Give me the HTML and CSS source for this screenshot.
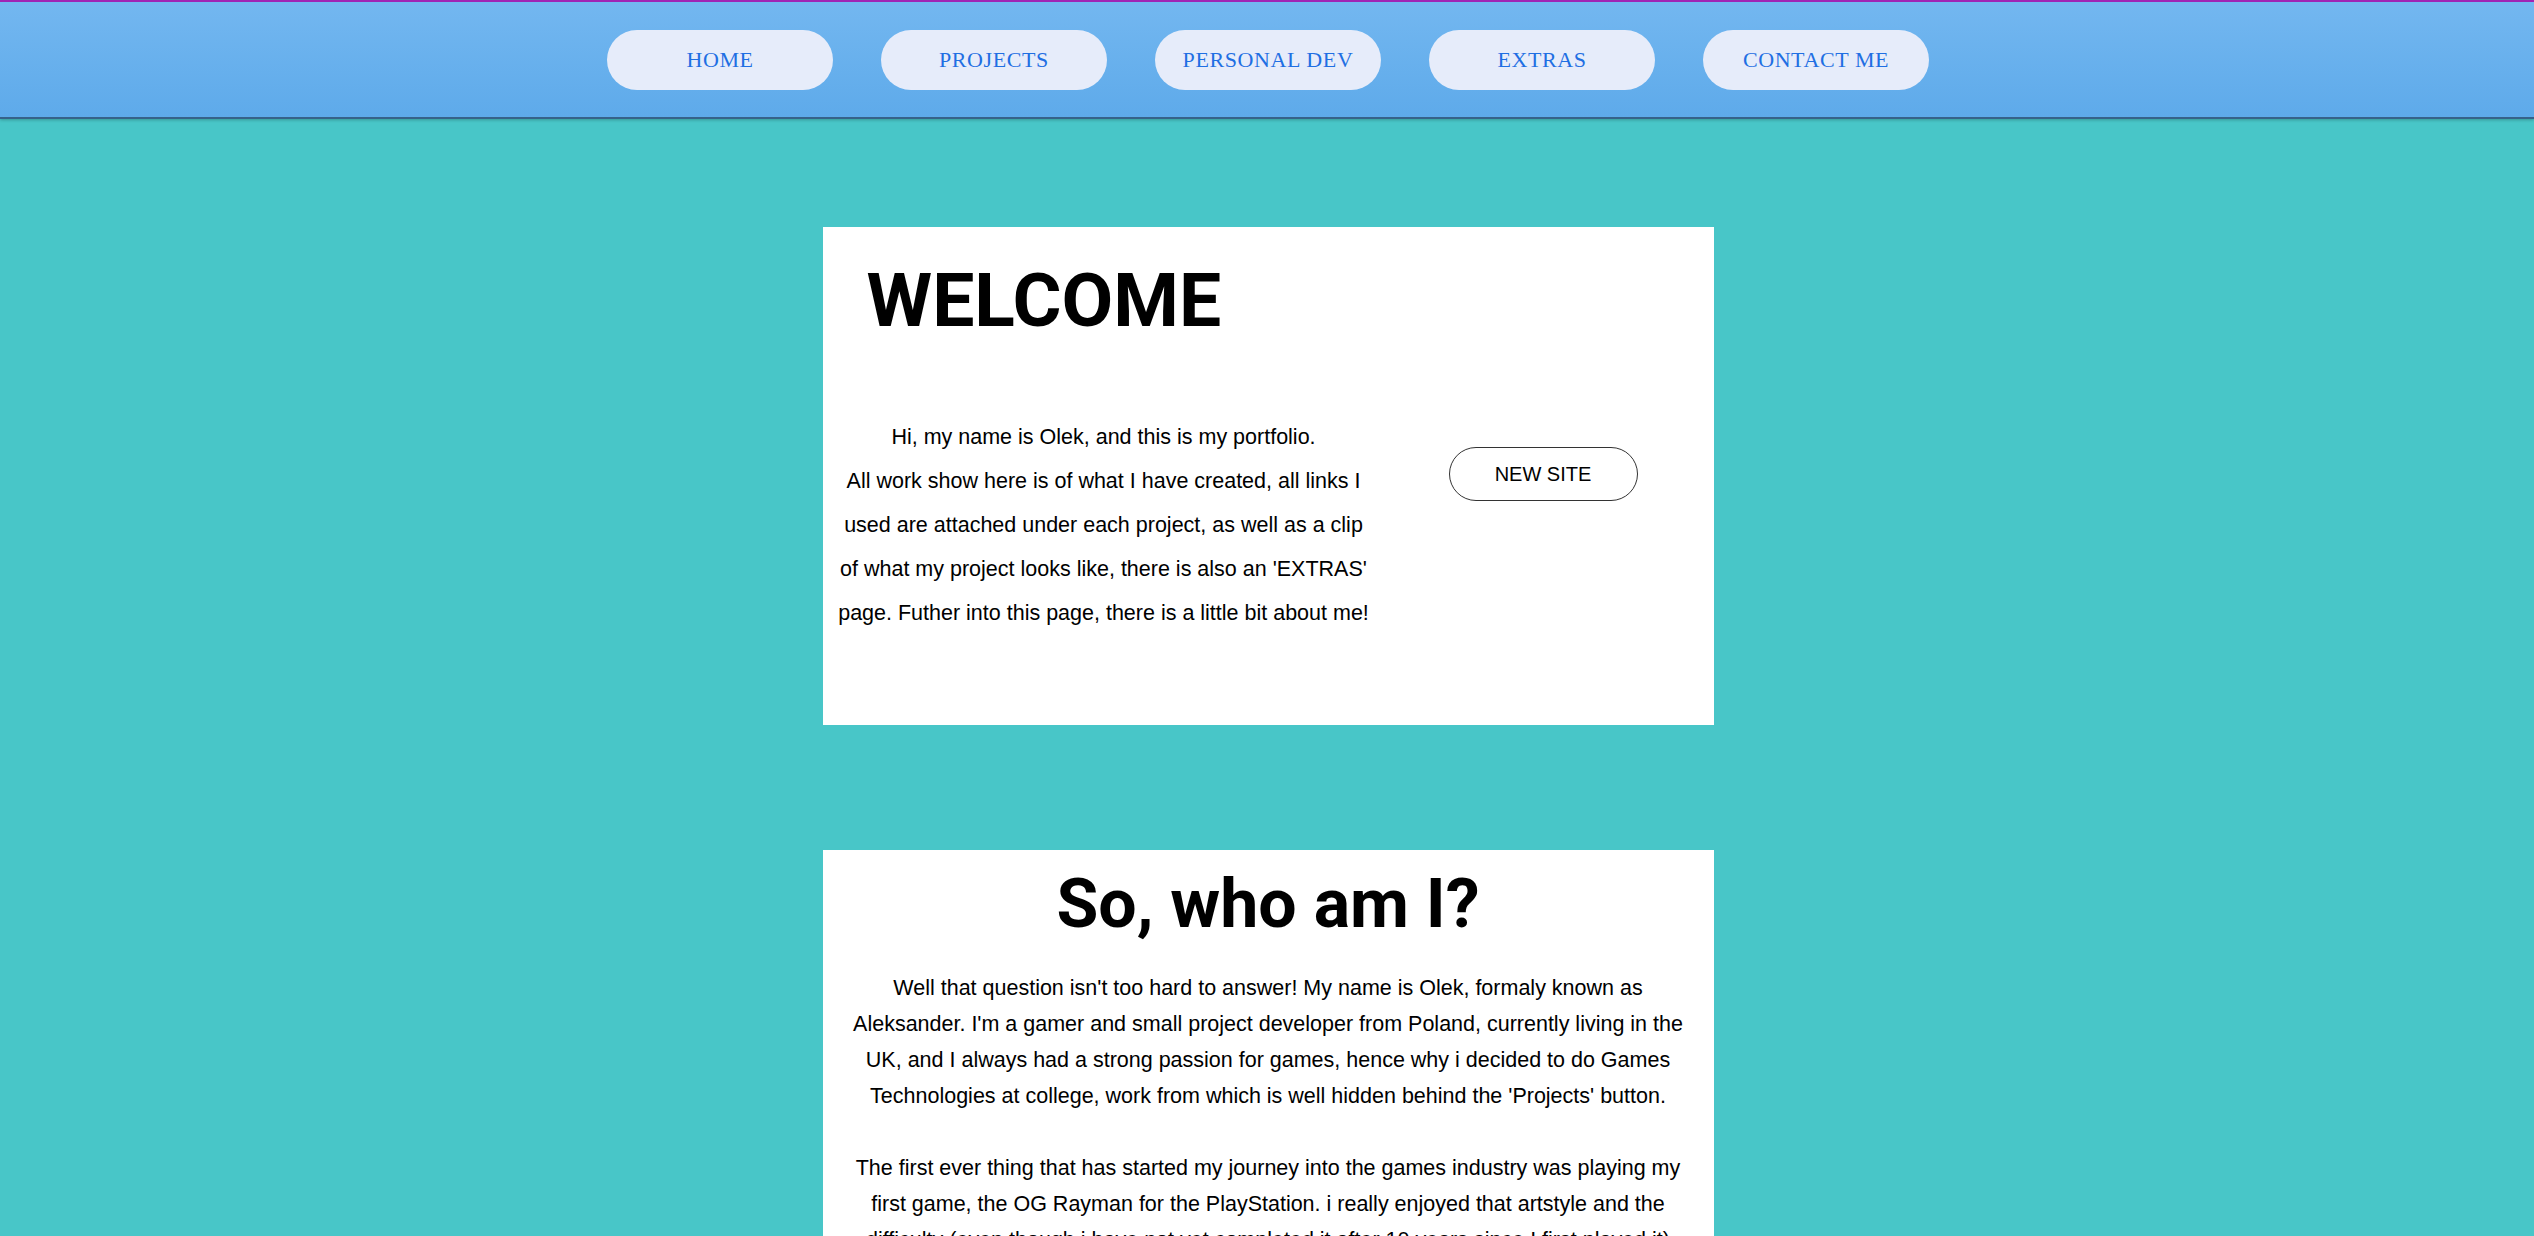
FILE: index.html
```html
<!DOCTYPE html>
<html lang="en">
<head>
<meta charset="utf-8">
<title>Olek - Portfolio</title>
<link rel="stylesheet" href="styles.css">
</head>
<body>
<header class="site-header">
  <nav class="nav">
    <a class="nav-btn" href="#">HOME</a>
    <a class="nav-btn" href="#">PROJECTS</a>
    <a class="nav-btn" href="#">PERSONAL DEV</a>
    <a class="nav-btn" href="#">EXTRAS</a>
    <a class="nav-btn" href="#">CONTACT ME</a>
  </nav>
</header>
<main class="main">
  <section class="card welcome">
    <h1 class="welcome-title">WELCOME</h1>
    <div class="intro-row">
      <p class="intro-text">Hi, my name is Olek, and this is my portfolio.<br>All work show here is of what I have created, all links I<br>used are attached under each project, as well as a clip<br>of what my project looks like, there is also an 'EXTRAS'<br>page. Futher into this page, there is a little bit about me!</p>
      <a class="new-site" href="#">NEW SITE</a>
    </div>
  </section>
  <section class="card about">
    <h2 class="about-title">So, who am I?</h2>
    <p class="about-text">Well that question isn't too hard to answer! My name is Olek, formaly known as<br>Aleksander. I'm a gamer and small project developer from Poland, currently living in the<br>UK, and I always had a strong passion for games, hence why i decided to do Games<br>Technologies at college, work from which is well hidden behind the 'Projects' button.</p>
    <p class="about-text">The first ever thing that has started my journey into the games industry was playing my<br>first game, the OG Rayman for the PlayStation. i really enjoyed that artstyle and the<br>difficulty (even though i have not yet completed it after 10 years since I first played it)<br>and ever since then I have wanted to make games of my own.</p>
  </section>
</main>
</body>
</html>
```

FILE: styles.css
```css
* { box-sizing: border-box; }

html, body {
  margin: 0;
  padding: 0;
}

body {
  background: #48c6c8;
  font-family: "Liberation Sans", Arial, sans-serif;
  color: #000;
}

.site-header {
  height: 119px;
  border-top: 2px solid #a024b4;
  border-bottom: 2px solid #36628a;
  background: linear-gradient(to bottom, #73b7f0 0%, #5eaaea 100%);
  box-shadow: 0 1px 3px rgba(0, 0, 0, 0.25);
  display: flex;
  align-items: center;
  justify-content: center;
}

.nav {
  display: flex;
  gap: 48px;
  margin-left: 2px;
}

.nav-btn {
  width: 226px;
  height: 60px;
  border-radius: 30px;
  background: #e6ecfa;
  color: #1f6fe3;
  text-decoration: none;
  font-family: "Liberation Serif", "Times New Roman", serif;
  font-size: 22px;
  letter-spacing: 0.6px;
  display: flex;
  align-items: center;
  justify-content: center;
}

.main {
  padding-top: 108px;
  display: flex;
  flex-direction: column;
  align-items: center;
  gap: 125px;
}

.card {
  width: 891px;
  background: #fff;
}

.welcome {
  height: 498px;
  padding-top: 29px;
  margin-left: 2px;
}

.welcome-title {
  margin: 0;
  padding-left: 44px;
  font-family: Roboto, "Liberation Sans", sans-serif;
  font-weight: 700;
  font-size: 75px;
  line-height: 89px;
}

.intro-row {
  display: flex;
  align-items: flex-start;
  margin-top: 70px;
  padding-left: 10px;
}

.intro-text {
  margin: 0;
  width: 542px;
  text-align: center;
  font-size: 21.5px;
  line-height: 44px;
  white-space: nowrap;
}

.new-site {
  margin-top: 32px;
  margin-left: 74px;
  width: 189px;
  height: 54px;
  border: 1px solid #333;
  border-radius: 27px;
  color: #000;
  text-decoration: none;
  font-size: 20px;
  display: flex;
  align-items: center;
  justify-content: center;
}

.about {
  margin-left: 2px;
  padding: 14px 20px 60px;
  text-align: center;
}

.about-title {
  margin: 0;
  font-family: Roboto, "Liberation Sans", sans-serif;
  font-weight: 700;
  font-size: 68px;
  line-height: 80px;
}

.about-text {
  margin: 26px 0 0;
  font-size: 21.5px;
  line-height: 36px;
  white-space: nowrap;
}

.about-text + .about-text {
  margin-top: 36px;
}
```
